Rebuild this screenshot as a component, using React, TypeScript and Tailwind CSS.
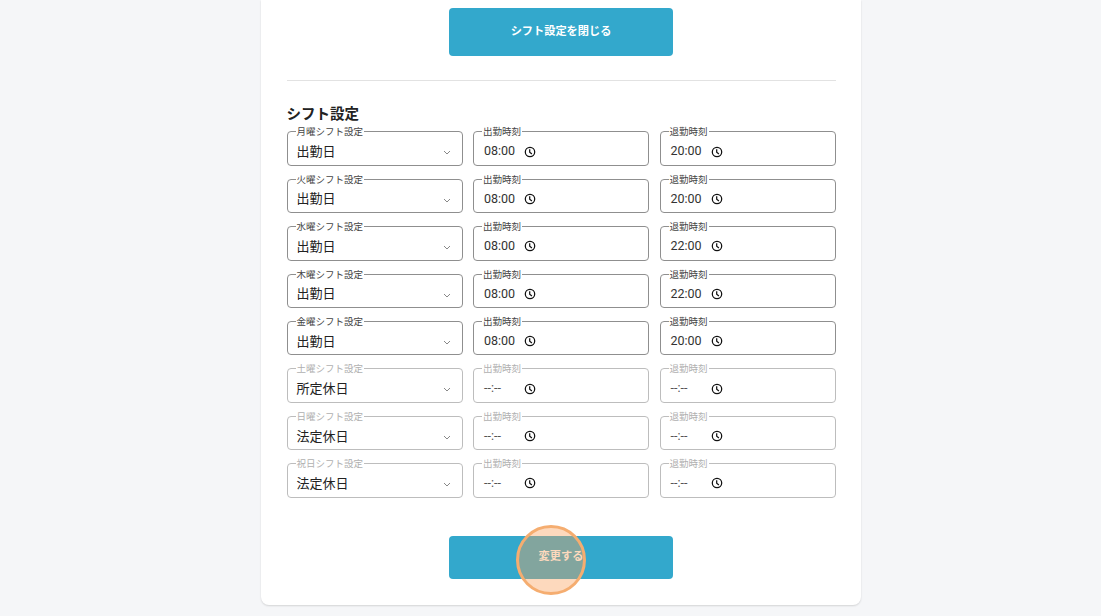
const FONT = "font-['Roboto','Noto_Sans_CJK_JP',sans-serif]";

const rows = [
  { day: "月曜シフト設定", kind: "出勤日", start: "08:00", end: "20:00", on: true },
  { day: "火曜シフト設定", kind: "出勤日", start: "08:00", end: "20:00", on: true },
  { day: "水曜シフト設定", kind: "出勤日", start: "08:00", end: "22:00", on: true },
  { day: "木曜シフト設定", kind: "出勤日", start: "08:00", end: "22:00", on: true },
  { day: "金曜シフト設定", kind: "出勤日", start: "08:00", end: "20:00", on: true },
  { day: "土曜シフト設定", kind: "所定休日", start: "--:--", end: "--:--", on: false },
  { day: "日曜シフト設定", kind: "法定休日", start: "--:--", end: "--:--", on: false },
  { day: "祝日シフト設定", kind: "法定休日", start: "--:--", end: "--:--", on: false },
];

function Box({ label, on, children }: { label: string; on: boolean; children: React.ReactNode }) {
  return (
    <div
      className={
        "relative flex h-[34.43px] items-center rounded border " +
        (on ? "border-[#8f8f8f]" : "border-[#bdbdbd]")
      }
    >
      <span
        className={
          "absolute -top-[6px] left-[8px] bg-white px-px text-[9.5px] leading-[11px] " +
          (on ? "text-[#444444]" : "text-[#b0b0b0]")
        }
      >
        {label}
      </span>
      {children}
    </div>
  );
}

function Clock() {
  return (
    <svg width="12" height="12" viewBox="0 0 12 12" fill="none" stroke="#111111" strokeWidth="1.25">
      <circle cx="6" cy="6" r="4.7" />
      <path d="M5.7 3.2v3l2.2 1.7" />
    </svg>
  );
}

function Time({ label, value, on }: { label: string; value: string; on: boolean }) {
  return (
    <Box label={label} on={on}>
      <span
        className={
          "ml-[10px] mt-[6px] w-[40px] text-[12.5px] leading-none " + (on ? "text-[#333333]" : "text-[#555555]")
        }
      >
        {value}
      </span>
      <span className="mt-[6px] flex">
        <Clock />
      </span>
    </Box>
  );
}

export default function App() {
  return (
    <div className={"flex h-[616px] justify-center overflow-hidden bg-[#f5f6f8] pl-5 " + FONT}>
      <div className="relative h-[605px] w-[600px] rounded-b-lg bg-white pl-[26px] pr-[25px] pt-2 shadow-[0_1px_2px_rgba(0,0,0,0.14)]">
        <div className="flex justify-center">
          <button className="h-12 w-[224px] rounded bg-[#33a8cc] text-[11.2px] font-bold text-white">
            シフト設定を閉じる
          </button>
        </div>
        <div className="mt-6 h-px bg-[#e2e2e2]" />
        <h2 className="mt-[23px] text-[14.5px] leading-[22px] font-bold text-[#222222]">シフト設定</h2>
        <div className="mt-[5.3px] grid grid-cols-3 gap-x-[10.5px] gap-y-[13px]">
          {rows.map((r) => (
            <div key={r.day} className="contents">
              <Box label={r.day} on={r.on}>
                <span className="ml-[9px] mt-[6px] text-[13px] leading-none text-[#222222]">{r.kind}</span>
                <svg
                  className="absolute right-[11px] top-[18px]"
                  width="8"
                  height="5"
                  viewBox="0 0 8 5"
                  fill="none"
                  stroke="#888888"
                  strokeWidth="1"
                >
                  <path d="M1 1l3 3 3-3" />
                </svg>
              </Box>
              <Time label="出勤時刻" value={r.start} on={r.on} />
              <Time label="退勤時刻" value={r.end} on={r.on} />
            </div>
          ))}
        </div>
        <div className="mt-[38.3px] flex justify-center">
          <button className="h-[43px] w-[224px] rounded bg-[#33a8cc] text-[11.2px] font-bold text-white">
            変更する
          </button>
        </div>
        <div className="absolute left-[255px] top-[525px] size-[70px] rounded-full border-[3px] border-[#f5ad70] bg-[#f9a15a]/40" />
      </div>
    </div>
  );
}
